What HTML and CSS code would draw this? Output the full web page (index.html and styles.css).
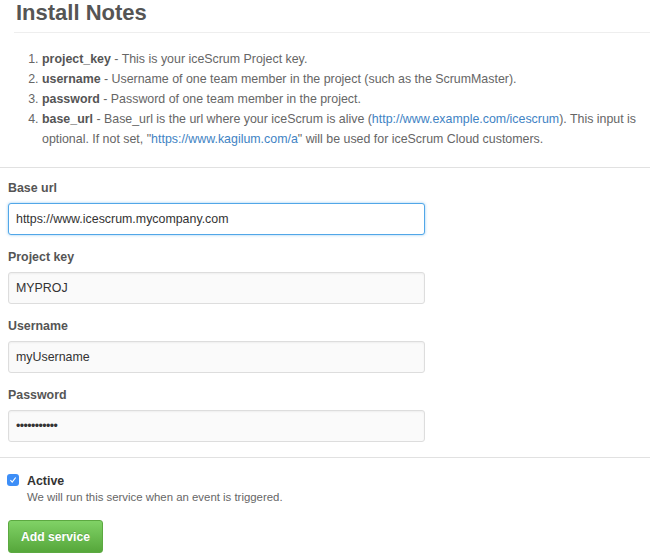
FILE: index.html
```html
<!DOCTYPE html>
<html lang="en">
<head>
    <meta charset="UTF-8">
    <title>Services / iceScrum</title>
    <link rel="stylesheet" href="styles.css">
</head>
<body>
    <div class="notes">
        <h2>Install Notes</h2>
        <ol>
            <li><strong>project_key</strong> - This is your iceScrum Project key.</li>
            <li><strong>username</strong> - Username of one team member in the project (such as the ScrumMaster).</li>
            <li><strong>password</strong> - Password of one team member in the project.</li>
            <li><strong>base_url</strong> - Base_url is the url where your iceScrum is alive (<a href="#">http://www.example.com/icescrum</a>). This input is optional. If not set, "<a href="#">https://www.kagilum.com/a</a>" will be used for iceScrum Cloud customers.</li>
        </ol>
    </div>

    <form class="fields">
        <div class="form-group">
            <label for="base_url">Base url</label>
            <input type="text" id="base_url" class="focused" value="https://www.icescrum.mycompany.com">
        </div>
        <div class="form-group">
            <label for="project_key">Project key</label>
            <input type="text" id="project_key" value="MYPROJ">
        </div>
        <div class="form-group">
            <label for="username">Username</label>
            <input type="text" id="username" value="myUsername">
        </div>
        <div class="form-group">
            <label for="password">Password</label>
            <input type="password" id="password" value="mypassword1">
        </div>
    </form>

    <div class="actions">
        <div class="active">
            <span class="check">
                <svg width="8" height="8" viewBox="0 0 8 8"><path d="M1.4 4.2 L3.2 6.1 L6.7 1.5" fill="none" stroke="#fff" stroke-width="1.2"/></svg>
            </span>
            <div>
                <div class="active-title">Active</div>
                <div class="active-note">We will run this service when an event is triggered.</div>
            </div>
        </div>
        <button type="button">Add service</button>
    </div>
</body>
</html>
```

FILE: styles.css
```css
body {
    margin: 0;
    font-family: 'Liberation Sans', Arial, sans-serif;
    font-size: 12.4px;
    color: #666;
    background: #fff;
}
a {
    color: #4183c4;
    text-decoration: none;
}
.notes {
    padding: 0 0 18px 14px;
    border-bottom: 1px solid #e1e1e1;
}
.notes h2 {
    margin: 0;
    padding: 0 0 6px 2px;
    font-size: 22px;
    line-height: 26px;
    color: #555;
    border-bottom: 1px solid #eee;
}
.notes ol {
    margin: 16px 0 0;
    padding-left: 28px;
    line-height: 20px;
}
.notes strong {
    color: #555;
}
.fields {
    padding: 11px 8px 2px;
    border-bottom: 1px solid #e1e1e1;
}
.form-group {
    margin-bottom: 13px;
}
.form-group label {
    display: block;
    margin-bottom: 6px;
    font-weight: bold;
    line-height: 18px;
    color: #555;
}
.form-group input {
    box-sizing: border-box;
    width: 417px;
    height: 32px;
    padding: 0 7px;
    border: 1px solid #ddd;
    border-radius: 3px;
    background: #fafafa;
    font-family: inherit;
    font-size: 12.4px;
    color: #333;
    outline: none;
    box-shadow: inset 0 1px 2px rgba(0, 0, 0, 0.05);
}
.form-group input[type="password"] {
    letter-spacing: -0.6px;
}
.form-group input.focused {
    background: #fff;
    border-color: #51a7e8;
    box-shadow: 0 0 3px rgba(81, 167, 232, 0.6);
}
.actions {
    padding: 15px 8px 5px;
}
.active {
    display: flex;
    gap: 8px;
}
.check {
    box-sizing: border-box;
    display: flex;
    align-items: center;
    justify-content: center;
    flex-shrink: 0;
    width: 12px;
    height: 12px;
    margin: 1px 0 0 -1px;
    border-radius: 3px;
    background: #3d8ef7;
}
.active-title {
    font-weight: bold;
    line-height: 16px;
    color: #333;
}
.active-note {
    font-size: 11.4px;
    line-height: 16px;
}
button {
    margin-top: 15px;
    width: 95px;
    height: 33px;
    border: 1px solid #5ca941;
    border-radius: 3px;
    background: linear-gradient(#80d266, #56a73b);
    color: #fff;
    font-family: inherit;
    font-size: 12.2px;
    font-weight: bold;
    text-shadow: 0 -1px 0 rgba(0, 0, 0, 0.15);
    cursor: pointer;
}
```
